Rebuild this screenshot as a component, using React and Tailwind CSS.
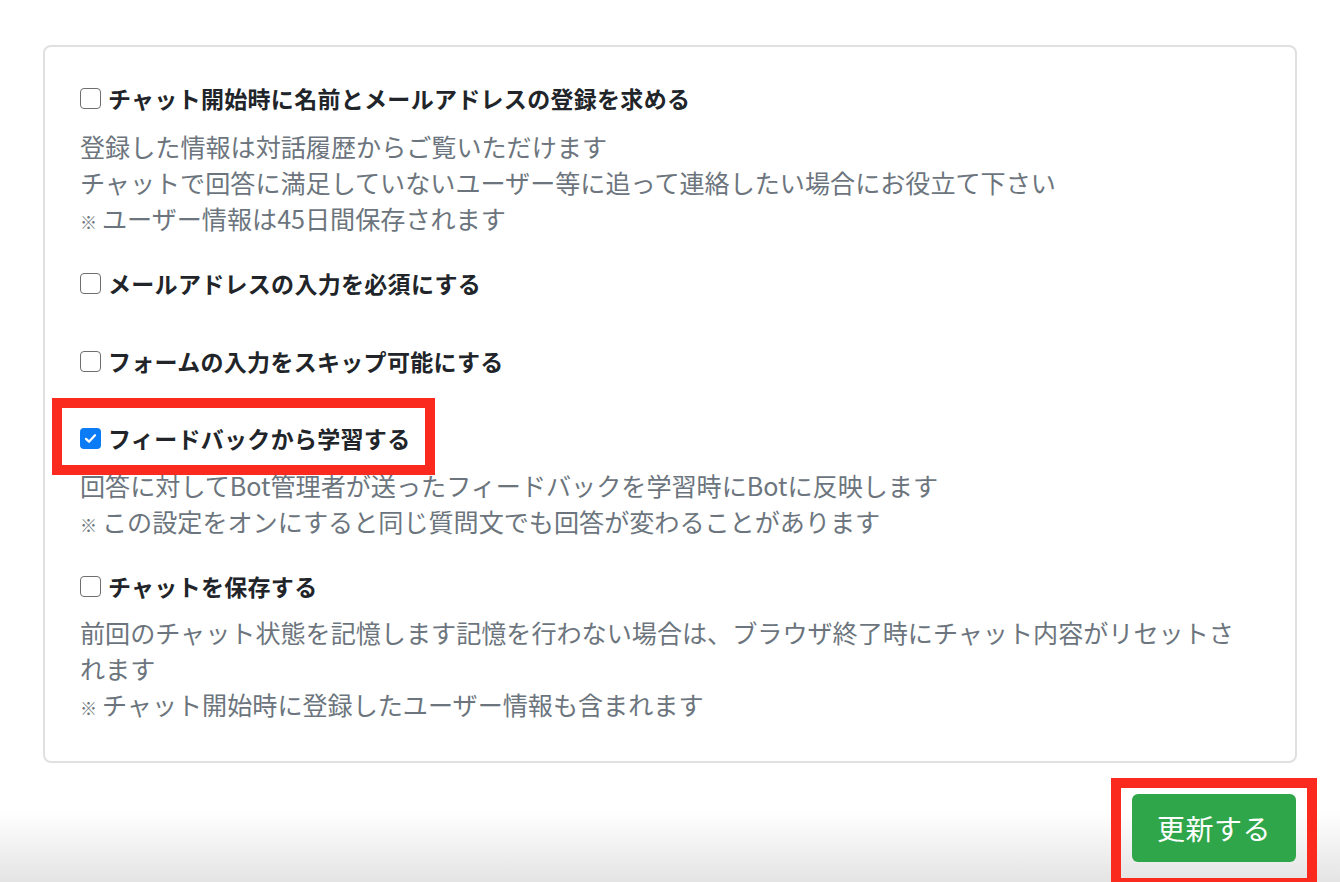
import React from "react";

const Box = ({ checked }) =>
    checked ? (
        <span className="w-[21px] h-[21px] rounded-[4px] bg-[#0b7cf6] flex items-center justify-center shrink-0">
            <svg viewBox="0 0 16 16" className="w-[15px] h-[15px]">
                <path d="M3.2 8.4 6.4 11.4 12.8 4.6" fill="none" stroke="#fff" strokeWidth="2.4" strokeLinecap="round" strokeLinejoin="round" />
            </svg>
        </span>
    ) : (
        <span className="w-[21px] h-[21px] rounded-[4px] border-[1.5px] border-[#6f6f6f] bg-white shrink-0" />
    );

const Title = ({ checked, children }) => (
    <div className="h-[36px] flex items-center gap-[7px]">
        <Box checked={checked} />
        <span className="text-[23px] font-bold text-[#212529] tracking-[0.3px]">{children}</span>
    </div>
);

const Note = ({ children }) => (
    <div>
        <span className="text-[17px] mr-[5px]">※</span>
        {children}
    </div>
);

const Desc = ({ children, className = "" }) => (
    <div className={`text-[25.1px] leading-[36px] text-[#6c757d] ${className}`}>{children}</div>
);

export default function App() {
    return (
        <div
            className="w-[1340px] h-[882px] overflow-hidden bg-gradient-to-b from-white from-[92%] to-[#e4e4e4] flex flex-col"
            style={{ fontFamily: '"Noto Sans CJK JP", "Noto Sans", sans-serif' }}
        >
            <div className="mx-[43px] mt-[45px] border-2 border-[#e0e0e0] rounded-[8px] bg-white pl-[35px] pr-[52px] pt-[33px] pb-[35px]">
                <Title>チャット開始時に名前とメールアドレスの登録を求める</Title>
                <Desc className="mt-[12px]">
                    <div>登録した情報は対話履歴からご覧いただけます</div>
                    <div>チャットで回答に満足していないユーザー等に追って連絡したい場合にお役立て下さい</div>
                    <Note>ユーザー情報は45日間保存されます</Note>
                </Desc>

                <div className="mt-[25px]">
                    <Title>メールアドレスの入力を必須にする</Title>
                </div>

                <div className="mt-[42px]">
                    <Title>フォームの入力をスキップ可能にする</Title>
                </div>

                <div className="mt-[41px] relative">
                    <div className="absolute left-[-28px] top-[-22px] w-[383px] h-[77px] border-[10px] border-[#fb2a1f]" />
                    <Title checked>フィードバックから学習する</Title>
                </div>
                <Desc className="mt-[11px]">
                    <div>回答に対してBot管理者が送ったフィードバックを学習時にBotに反映します</div>
                    <Note>この設定をオンにすると同じ質問文でも回答が変わることがあります</Note>
                </Desc>

                <div className="mt-[25px]">
                    <Title>チャットを保存する</Title>
                </div>
                <Desc className="mt-[10px]">
                    <div>前回のチャット状態を記憶します記憶を行わない場合は、ブラウザ終了時にチャット内容がリセットされます</div>
                    <Note>チャット開始時に登録したユーザー情報も含まれます</Note>
                </Desc>
            </div>

            <div className="flex justify-end mr-[23px] mt-[15px]">
                <div className="border-[10px] border-[#fb2a1f] pt-[6px] pb-[10px] px-[11px] h-[110px]">
                    <button className="w-[164px] h-[68px] rounded-[6px] bg-[#30a64a] text-white text-[28px] tracking-[0.5px]">
                        更新する
                    </button>
                </div>
            </div>
        </div>
    );
}
